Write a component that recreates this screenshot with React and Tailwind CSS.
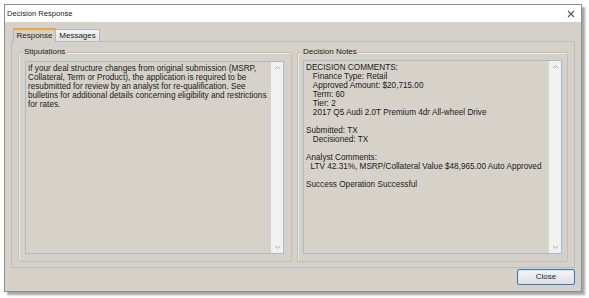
import React from "react";

const font = { fontFamily: '"Liberation Sans", Arial, sans-serif' };

function ScrollTrack() {
    return (
        <div className="w-[12px] h-full bg-[#f1f1f1] flex flex-col items-center justify-between py-[3px]">
            <svg width="7" height="5" viewBox="0 0 7 5"><path d="M1 4 L3.5 1.5 L6 4" stroke="#a8a8a8" strokeWidth="1" fill="none" /></svg>
            <svg width="7" height="5" viewBox="0 0 7 5"><path d="M1 1 L3.5 3.5 L6 1" stroke="#a8a8a8" strokeWidth="1" fill="none" /></svg>
        </div>
    )
}

function GroupBox({ title, children, className }) {
    return (
        <div className={"relative flex-1 border border-[#c3bfb7] rounded-[2px] shadow-[inset_1px_1px_0_#ebe8e2] " + className}>
            <span className="absolute left-[4px] top-[-6px] px-[1px] bg-[#d5d1c9] text-[8px] leading-[10px] text-[#222]">{title}</span>
            {children}
        </div>
    )
}

function TextBox({ text }) {
    return (
        <div className="flex h-full border border-[#a7bbcf] bg-[#d6d2ca]">
            <div className="flex-1 pl-[2px] pt-[2px] text-[8.2px] leading-[9px] text-[#1a1a1a] whitespace-pre-wrap">{text}</div>
            <ScrollTrack />
        </div>
    )
}

const stipulations = "If your deal structure changes from original submission (MSRP,\nCollateral, Term or Product), the application is required to be\nresubmitted for review by an analyst for re-qualification. See\nbulletins for additional details concerning eligibility and restrictions\nfor rates.";

const notes = "DECISION COMMENTS:\n   Finance Type: Retail\n   Approved Amount: $20,715.00\n   Term: 60\n   Tier: 2\n   2017 Q5 Audi 2.0T Premium 4dr All-wheel Drive\n\nSubmitted: TX\n   Decisioned: TX\n\nAnalyst Comments:\n  LTV 42.31%, MSRP/Collateral Value $48,965.00 Auto Approved\n\nSuccess Operation Successful";

export default function App() {
    return (
        <div className="w-[589px] h-[298px] bg-white" style={font}>
            <div className="ml-[4px] mt-[4px] w-[578px] h-[288px] border border-[#8e8e8e] shadow-[3px_3px_2px_rgba(0,0,0,0.35)] flex flex-col">
                <div className="h-[17px] bg-white flex items-center justify-between pl-[2px] pr-[6px]">
                    <span className="text-[7.6px] text-[#222]">Decision Response</span>
                    <svg width="8" height="8" viewBox="0 0 8 8"><path d="M1 1 L7 7 M7 1 L1 7" stroke="#555" strokeWidth="1.1" /></svg>
                </div>
                <div className="flex-1 bg-[#d5d1c9] flex flex-col pl-[6px] pr-[6px] pt-[5px]">
                    <div className="flex items-end h-[14px] pl-[2px] relative z-10">
                        <div className="w-[43px] h-[14px] border border-[#a9b6c4] border-b-0 border-t-2 border-t-[#f2a531] bg-[#d5d1c9] text-[8px] flex items-center justify-center text-[#222] mb-[-1px] pb-[1px]">Response</div>
                        <div className="w-[44px] h-[12px] border border-[#a9b6c4] border-b-0 border-l-0 bg-gradient-to-b from-[#f4f4f4] to-[#e2e2e0] text-[8px] flex items-center justify-center text-[#222]">Messages</div>
                    </div>
                    <div className="h-[227px] border border-[#b4bec8] flex gap-[5px] pl-[6px] pr-[6px] pt-[10px] pb-[5px]">
                        <GroupBox title="Stipulations" className="pl-[6px] pr-[7px] pt-[8px] pb-[7px]">
                            <TextBox text={stipulations} />
                        </GroupBox>
                        <GroupBox title="Decision Notes" className="pl-[5px] pr-[5px] pt-[7px] pb-[7px]">
                            <TextBox text={notes} />
                        </GroupBox>
                    </div>
                    <div className="flex justify-end mt-[1px]">
                        <button className="w-[58px] h-[16px] border border-[#3d7ab8] rounded-[2px] bg-gradient-to-b from-[#f6f6f6] to-[#dedede] text-[8px] text-[#222] shadow-[inset_0_0_0_1px_#cde4f7]">Close</button>
                    </div>
                </div>
            </div>
        </div>
    )
}
